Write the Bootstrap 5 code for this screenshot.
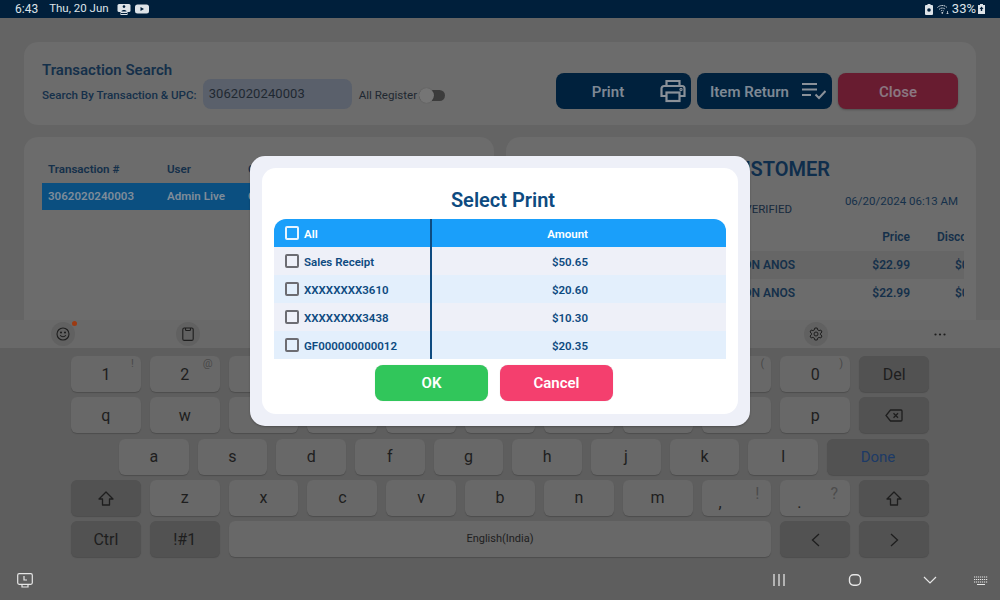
<!DOCTYPE html>
<html lang="en">
<head>
<meta charset="UTF-8">
<title>Transaction Search</title>
<link href="https://cdn.jsdelivr.net/npm/bootstrap@5.3.0/dist/css/bootstrap.min.css" rel="stylesheet">
<style>
  html, body { width: 1000px; height: 600px; overflow: hidden; }
  body { font-family: Roboto, "Liberation Sans", sans-serif; background: #646464; position: relative; }
  .status-bar { height: 18px; background: #001f3b; color: #dde3e8; font-size: 12px; padding: 0 15px; }
  .status-date { font-size: 11.5px; margin-left: 11px; margin-right: 8px; }
  .status-pct { font-size: 13px; margin: 0 2px 0 3px; }

  .main-area { height: 302px; padding: 24px 24px 0; overflow: hidden; background: #646464; }
  .panel { background: #6c6c6c; border-radius: 14px; }
  .search-panel { height: 83px; padding: 19px 18px 16px; margin-bottom: 12px; }
  .panel-title { font-size: 15px; line-height: 18px; font-weight: 600; color: #15304a; }
  .search-label { font-size: 11.6px; font-weight: 500; color: #15304a; margin-right: 6px; padding-top: 3px; }
  .search-input { width: 149px; height: 30px; background: #5a606b; border-radius: 8px; padding: 0 6px; font-size: 13px; letter-spacing: .1px; color: #1f2831; line-height: 30px; }
  .register-label { font-size: 11.6px; color: #1f2831; margin-left: 7px; padding-top: 3px; }
  .toggle-track { width: 26px; height: 11px; background: #3c3c3c; border-radius: 6px; position: relative; margin-left: 2px; margin-top: 2px; }
  .toggle-knob { position: absolute; left: 0; top: -2px; width: 15px; height: 15px; border-radius: 50%; background: #757575; box-shadow: 0 0 1px rgba(0,0,0,.3); }
  .act-group { gap: 6px; }
  .act-btn { height: 36px; border-radius: 8px; border: 0; padding: 2px 0 0; font-size: 15px; font-weight: 600; color: #7d8894; background: #00213d; }
  .act-btn:hover { color: #7d8894; background: #00213d; }
  .act-wide { width: 135px; }
  .act-close { width: 120px; background: #681c30; color: #8a7680; box-shadow: 0 1px 2px rgba(0,0,0,.25); }
  .act-close:hover { background: #681c30; color: #8a7680; }
  .print-icon { margin-right: 5px; margin-top: -2px; }
  .list-icon { margin-right: 6px; margin-top: -2px; }

  .lower-panel { width: 470px; height: 240px; overflow: hidden; }
  .tx-panel { padding: 24px 18px 0; }
  .tx-row { height: 27px; font-size: 11.6px; font-weight: 600; white-space: nowrap; overflow: hidden; padding-left: 6px; }
  .tx-head { height: 22px; color: #15304a; }
  .tx-sel { background: #0b4f80; color: #7f8c99; }
  .tx-c1 { width: 119px; }
  .tx-c2 { width: 81px; }

  .sale-panel { padding: 20px 12px 0 0; }
  .sale-title { font-size: 20px; line-height: 24px; font-weight: 600; color: #0f2e4c; text-align: right; padding-right: 134px; }
  .sale-meta { height: 46px; padding: 12px 6px 0 0; font-size: 11.5px; color: #15304a; }
  .sale-date { line-height: 16px; margin-left: auto; }
  .sale-verified { line-height: 16px; margin-top: 8px; width: 286px; flex-shrink: 0; text-align: right; color: #16293c; }
  .sale-row { height: 28px; font-size: 12px; font-weight: 600; color: #15304a; white-space: nowrap; overflow: hidden; }
  .sale-head { height: 24px; padding-top: 1px; }
  .sale-band { background: #666; }
  .sale-name { width: 289px; flex-shrink: 0; text-align: right; }
  .sale-price { width: 115px; flex-shrink: 0; text-align: right; }
  .sale-disc { padding-left: 27px; flex-shrink: 0; }
  .sale-amt { padding-left: 45px; flex-shrink: 0; }

  .kb-tools { height: 28px; background: #696969; display: grid; grid-template-columns: repeat(8, 125.6px); align-items: center; justify-items: center; }
  .tool-dot { width: 24px; height: 24px; border-radius: 50%; background: #616161; position: relative; }
  .tool-badge { position: absolute; top: -1px; right: -2px; width: 5px; height: 5px; border-radius: 50%; background: #9c3a12; }
  .tool-col-7 { grid-column: 7; }
  .tool-col-8 { grid-column: 8; margin-right: 4px; }
  .kb-body { height: 252px; background: #5e5e5e; padding: 8px 71px 0 71px; }
  .kb-row { display: grid; grid-template-columns: repeat(11, 1fr); gap: 9px; margin-bottom: 5.25px; }
  .kb-row-home { grid-template-columns: repeat(9, 1fr) 102px; padding-left: 48px; }
  .kb-key { height: 36px; background: #686868; border-radius: 6px; box-shadow: 0 1px 1px rgba(0,0,0,.18); font-size: 16px; color: #1e1e1e; position: relative; padding-top: 1px; }
  .kb-dark { background: #525252; }
  .kb-wide { grid-column: span 7; font-size: 11px; }
  .kb-hint { position: absolute; top: 1px; right: 7px; font-size: 11px; line-height: 14px; color: #484848; }
  .kb-hint-lg { top: 5px; right: 12px; font-size: 16px; line-height: 18px; color: #4c4c4c; }
  .kb-mark { position: absolute; bottom: 5px; left: 17px; font-size: 16px; line-height: 16px; }
  .kb-done { color: #1d3a66; font-size: 15px; }

  .nav-bar { position: absolute; left: 0; right: 0; bottom: 10px; height: 20px; padding: 0 12px 0 17px; }
  .nav-home { margin-left: 62px; }
  .nav-back { margin-left: 61px; }
  .nav-kbd { margin-left: 37px; }

  .sheet { position: absolute; left: 250px; top: 156px; width: 500px; height: 270px; background: #eef0f8; border-radius: 15px; padding: 12px; box-shadow: 0 1px 2px rgba(0,0,0,.25); }
  .sheet-inner { background: #fff; border-radius: 14px; height: 246px; padding: 0 12px; }
  .sheet-title { font-size: 20px; line-height: 24px; font-weight: 600; color: #0d4a80; text-align: center; padding: 20px 0 7px 6px; margin: 0; }
  .pick-table { height: 140px; overflow: hidden; }
  .pick-row { height: 28px; font-size: 11.5px; font-weight: 600; color: #0d4a80; }
  .pick-head { background: #1a9ffa; color: #fff; border-radius: 12px 12px 0 0; }
  .pick-odd { background: #eef0f8; }
  .pick-even { background: #e3effc; }
  .pick-name { width: 158px; height: 100%; padding-left: 11px; border-right: 2px solid #0d4a80; }
  .pick-text { padding-top: 3px; }
  .pick-amt { width: 156px; text-align: right; padding-top: 3px; }
  .pick-check.form-check-input { width: 14px; height: 14px; margin: 0 5px 0 0; background-color: transparent; border: 2px solid #6c6c72; border-radius: 2px; }
  .pick-head .pick-check.form-check-input { border-color: #e6f4ff; }
  .sheet-actions { margin-top: 6px; gap: 12px; padding-right: 12px; }
  .sheet-btn { width: 113px; height: 36px; border: 0; border-radius: 8px; padding: 1px 0 0; font-size: 15px; font-weight: 600; color: #fff; box-shadow: 0 0 1px rgba(0,0,0,.2); }
  .sheet-ok, .sheet-ok:hover { background: #31c65b; color: #fff; }
  .sheet-cancel, .sheet-cancel:hover { background: #f43f6e; color: #fff; }
</style>
</head>
<body>
  <div class="status-bar d-flex align-items-center">
    <span>6:43</span>
    <span class="status-date">Thu, 20 Jun</span>
    <svg width="14" height="12" viewBox="0 0 14 12" class="me-1"><rect x="0.5" y="1" width="13" height="8" rx="1.5" fill="#dde3e8"/><circle cx="7" cy="3.6" r="1.3" fill="#001f3b"/><path d="M4.5 8.5c0-2 5-2 5 0z" fill="#001f3b"/><rect x="4" y="9.5" width="6" height="2" fill="none" stroke="#dde3e8"/></svg>
    <svg width="14" height="10" viewBox="0 0 14 10"><rect width="14" height="9" y="0.5" rx="2.5" fill="#dde3e8"/><path d="M5.500 3v4l3.500-2z" fill="#001f3b"/></svg>
    <div class="ms-auto d-flex align-items-center">
      <svg width="8" height="11" viewBox="0 0 8 11" class="me-1"><path d="M2.500 0h3v1H7a1 1 0 0 1 1 1v8a1 1 0 0 1-1 1H1a1 1 0 0 1-1-1V2a1 1 0 0 1 1-1h1.500z" fill="#dde3e8"/><circle cx="4" cy="6" r="1.800" fill="#001f3b"/></svg>
      <svg width="12" height="11" viewBox="0 0 12 11"><g fill="none" stroke="#dde3e8" stroke-width="1" stroke-dasharray="1.500 .7"><path d="M0.500 3.500C3 .8 7.500 .8 10 3.500"/><path d="M2.200 5.300c1.700-1.700 4.400-1.700 6.100 0"/><path d="M3.900 7c.8-.8 2-.8 2.800 0"/></g><circle cx="5.300" cy="8.800" r=".9" fill="#dde3e8"/><path d="M10.500 7v3M9.500 9l1 1 1-1" stroke="#dde3e8" stroke-width=".7" fill="none"/></svg>
      <span class="status-pct">33%</span>
      <svg width="7" height="10" viewBox="0 0 7 10"><path d="M2 0h3v1h2v9H0V1h2z" fill="#dde3e8"/><path d="M3.500 2.500L1.500 5h1.300v2h1.400V5h1.300z" fill="#001f3b"/></svg>
    </div>
  </div>

  <div class="main-area">
    <div class="panel search-panel d-flex justify-content-between">
      <div>
        <div class="panel-title">Transaction Search</div>
        <div class="d-flex align-items-center">
          <span class="search-label">Search By Transaction &amp; UPC:</span>
          <div class="search-input">3062020240003</div>
          <span class="register-label">All Register</span>
          <div class="toggle-track"><div class="toggle-knob"></div></div>
        </div>
      </div>
      <div class="d-flex align-self-end act-group">
        <button class="btn act-btn act-wide d-flex align-items-center">
          <span class="flex-grow-1">Print</span>
          <svg class="print-icon" width="26" height="24" viewBox="0 0 26 24" fill="none" stroke="#8a9199" stroke-width="2.200"><path d="M6.500 7V2h13v5"/><path d="M6.500 17H1.500V9.500a2.500 2.500 0 0 1 2.500-2.500h18a2.500 2.500 0 0 1 2.500 2.500V17h-5"/><rect x="6.500" y="13.500" width="13" height="8.500"/><circle cx="21" cy="10.500" r=".6"/></svg>
        </button>
        <button class="btn act-btn act-wide d-flex align-items-center">
          <span class="flex-grow-1">Item Return</span>
          <svg class="list-icon" width="24" height="18" viewBox="0 0 24 18" fill="none" stroke="#8a9199" stroke-width="2"><path d="M0 2h15M0 7.500h15M0 13h9"/><path d="M13.500 12.500l3.500 3.500 6.500-7"/></svg>
        </button>
        <button class="btn act-btn act-close">Close</button>
      </div>
    </div>

    <div class="d-flex justify-content-between">
      <div class="panel lower-panel tx-panel">
        <div class="tx-row tx-head d-flex align-items-start">
          <div class="tx-c1">Transaction #</div><div class="tx-c2">User</div><div>C</div>
        </div>
        <div class="tx-row tx-sel d-flex align-items-center">
          <div class="tx-c1">3062020240003</div><div class="tx-c2">Admin Live</div><div>C</div>
        </div>
      </div>
      <div class="panel lower-panel sale-panel">
        <div class="sale-title">CUSTOMER</div>
        <div class="sale-meta d-flex">
          <div class="sale-verified">VERIFIED</div>
          <div class="sale-date">06/20/2024 06:13 AM</div>
        </div>
        <div class="sale-row sale-head d-flex align-items-start">
          <div class="sale-name"></div><div class="sale-price">Price</div><div class="sale-disc">Discount</div>
        </div>
        <div class="sale-row sale-band d-flex align-items-center">
          <div class="sale-name">ON ANOS</div><div class="sale-price">$22.99</div><div class="sale-amt">$0.00</div>
        </div>
        <div class="sale-row d-flex align-items-center">
          <div class="sale-name">ON ANOS</div><div class="sale-price">$22.99</div><div class="sale-amt">$0.00</div>
        </div>
      </div>
    </div>
  </div>

  <div class="kb-tools">
    <div class="tool-dot d-flex align-items-center justify-content-center">
      <svg width="14" height="14" viewBox="0 0 14 14" fill="none" stroke="#1e1e1e" stroke-width="1.100"><circle cx="7" cy="7" r="6"/><path d="M4.200 8.200c1.400 2 4.200 2 5.600 0"/><circle cx="5" cy="5.500" r=".5"/><circle cx="9" cy="5.500" r=".5"/></svg>
      <span class="tool-badge"></span>
    </div>
    <div class="tool-dot d-flex align-items-center justify-content-center">
      <svg width="12" height="14" viewBox="0 0 12 14" fill="none" stroke="#1e1e1e" stroke-width="1.100"><rect x="0.800" y="1" width="10.400" height="12.400" rx="1.500"/><path d="M3.500 1v1.500a1 1 0 0 0 1 1h3a1 1 0 0 0 1-1V1"/></svg>
    </div>
    <div class="tool-dot tool-col-7 d-flex align-items-center justify-content-center">
      <svg width="14" height="14" viewBox="0 0 14 14" fill="none" stroke="#1e1e1e" stroke-width="1"><path d="M5.800 1h2.400l.4 1.800 1.500.8 1.700-.6 1.200 2-1.400 1.200v1.600l1.400 1.200-1.200 2-1.700-.6-1.500.8-.4 1.800H5.800l-.4-1.800-1.500-.8-1.700.6-1.200-2 1.400-1.200V6.200L1 5l1.200-2 1.700.6 1.500-.8z"/><circle cx="7" cy="7" r="2"/></svg>
    </div>
    <svg class="tool-col-8" width="12" height="3" viewBox="0 0 12 3"><circle cx="1.500" cy="1.500" r="1.100" fill="#1e1e1e"/><circle cx="6" cy="1.500" r="1.100" fill="#1e1e1e"/><circle cx="10.500" cy="1.500" r="1.100" fill="#1e1e1e"/></svg>
  </div>

  <div class="kb-body">
    <div class="kb-row">
      <div class="kb-key d-flex align-items-center justify-content-center">1<span class="kb-hint">!</span></div>
      <div class="kb-key d-flex align-items-center justify-content-center">2<span class="kb-hint">@</span></div>
      <div class="kb-key"></div>
      <div class="kb-key"></div>
      <div class="kb-key"></div>
      <div class="kb-key"></div>
      <div class="kb-key"></div>
      <div class="kb-key"></div>
      <div class="kb-key"><span class="kb-hint">(</span></div>
      <div class="kb-key d-flex align-items-center justify-content-center">0<span class="kb-hint">)</span></div>
      <div class="kb-key kb-dark d-flex align-items-center justify-content-center">Del</div>
    </div>
    <div class="kb-row">
      <div class="kb-key d-flex align-items-center justify-content-center">q</div>
      <div class="kb-key d-flex align-items-center justify-content-center">w</div>
      <div class="kb-key"></div>
      <div class="kb-key"></div>
      <div class="kb-key"></div>
      <div class="kb-key"></div>
      <div class="kb-key"></div>
      <div class="kb-key"></div>
      <div class="kb-key"></div>
      <div class="kb-key d-flex align-items-center justify-content-center">p</div>
      <div class="kb-key kb-dark d-flex align-items-center justify-content-center">
        <svg width="18" height="13" viewBox="0 0 18 13" fill="none" stroke="#1e1e1e" stroke-width="1.300"><path d="M5.500 1H16a1 1 0 0 1 1 1v9a1 1 0 0 1-1 1H5.500L1 6.500z"/><path d="M8.500 4.300l4.500 4.400M13 4.300L8.500 8.700"/></svg>
      </div>
    </div>
    <div class="kb-row kb-row-home">
      <div class="kb-key d-flex align-items-center justify-content-center">a</div>
      <div class="kb-key d-flex align-items-center justify-content-center">s</div>
      <div class="kb-key d-flex align-items-center justify-content-center">d</div>
      <div class="kb-key d-flex align-items-center justify-content-center">f</div>
      <div class="kb-key d-flex align-items-center justify-content-center">g</div>
      <div class="kb-key d-flex align-items-center justify-content-center">h</div>
      <div class="kb-key d-flex align-items-center justify-content-center">j</div>
      <div class="kb-key d-flex align-items-center justify-content-center">k</div>
      <div class="kb-key d-flex align-items-center justify-content-center">l</div>
      <div class="kb-key kb-dark kb-done d-flex align-items-center justify-content-center">Done</div>
    </div>
    <div class="kb-row">
      <div class="kb-key kb-dark d-flex align-items-center justify-content-center">
        <svg width="16" height="15" viewBox="0 0 16 15" fill="none" stroke="#1e1e1e" stroke-width="1.300"><path d="M8 1l7 7h-3.500v6h-7V8H1z" stroke-linejoin="round"/></svg>
      </div>
      <div class="kb-key d-flex align-items-center justify-content-center">z</div>
      <div class="kb-key d-flex align-items-center justify-content-center">x</div>
      <div class="kb-key d-flex align-items-center justify-content-center">c</div>
      <div class="kb-key d-flex align-items-center justify-content-center">v</div>
      <div class="kb-key d-flex align-items-center justify-content-center">b</div>
      <div class="kb-key d-flex align-items-center justify-content-center">n</div>
      <div class="kb-key d-flex align-items-center justify-content-center">m</div>
      <div class="kb-key"><span class="kb-mark">,</span><span class="kb-hint kb-hint-lg">!</span></div>
      <div class="kb-key"><span class="kb-mark">.</span><span class="kb-hint kb-hint-lg">?</span></div>
      <div class="kb-key kb-dark d-flex align-items-center justify-content-center">
        <svg width="16" height="15" viewBox="0 0 16 15" fill="none" stroke="#1e1e1e" stroke-width="1.300"><path d="M8 1l7 7h-3.500v6h-7V8H1z" stroke-linejoin="round"/></svg>
      </div>
    </div>
    <div class="kb-row">
      <div class="kb-key kb-dark d-flex align-items-center justify-content-center">Ctrl</div>
      <div class="kb-key kb-dark d-flex align-items-center justify-content-center">!#1</div>
      <div class="kb-key kb-wide d-flex align-items-center justify-content-center">English(India)</div>
      <div class="kb-key kb-dark d-flex align-items-center justify-content-center">
        <svg width="9" height="14" viewBox="0 0 9 14" fill="none" stroke="#1e1e1e" stroke-width="1.300"><path d="M8 1L1.500 7 8 13"/></svg>
      </div>
      <div class="kb-key kb-dark d-flex align-items-center justify-content-center">
        <svg width="9" height="14" viewBox="0 0 9 14" fill="none" stroke="#1e1e1e" stroke-width="1.300"><path d="M1 1l6.500 6L1 13"/></svg>
      </div>
    </div>
  </div>

  <div class="nav-bar d-flex align-items-center">
    <svg width="16" height="15" viewBox="0 0 16 15" fill="none" stroke="#e6e6e6" stroke-width="1.200"><rect x="0.700" y="0.700" width="14.600" height="10.600" rx="1.500"/><path d="M7 3v4h3"/><path d="M5 11.500v2.500h6v-2.500"/></svg>
    <svg class="ms-auto" width="14" height="12" viewBox="0 0 14 12" stroke="#d8d8d8" stroke-width="1.400"><path d="M2 0v12M7 0v12M12 0v12"/></svg>
    <svg class="nav-home" width="14" height="12" viewBox="0 0 14 12" fill="none" stroke="#e6e6e6" stroke-width="1.400"><rect x="1.500" y="0.800" width="11" height="10.400" rx="4"/></svg>
    <svg class="nav-back" width="14" height="8" viewBox="0 0 14 8" fill="none" stroke="#e6e6e6" stroke-width="1.200"><path d="M1 1l6 6 6-6"/></svg>
    <svg class="nav-kbd" width="14" height="9" viewBox="0 0 14 9" fill="none" stroke="#e6e6e6"><path d="M0 1h14M0 3.500h14" stroke-dasharray="1.200 .8" stroke-width="1.200"/><path d="M0 6h14" stroke-dasharray="1.200 .8" stroke-width="1.200"/><path d="M3 8.500h8" stroke-width="1"/></svg>
  </div>

  <div class="sheet">
    <div class="sheet-inner">
      <h5 class="sheet-title">Select Print</h5>
      <div class="pick-table">
        <div class="pick-row pick-head d-flex align-items-center">
          <div class="pick-name d-flex align-items-center"><input class="form-check-input pick-check" type="checkbox"><span class="pick-text">All</span></div>
          <div class="pick-amt">Amount</div>
        </div>
        <div class="pick-row pick-odd d-flex align-items-center">
          <div class="pick-name d-flex align-items-center"><input class="form-check-input pick-check" type="checkbox"><span class="pick-text">Sales Receipt</span></div>
          <div class="pick-amt">$50.65</div>
        </div>
        <div class="pick-row pick-even d-flex align-items-center">
          <div class="pick-name d-flex align-items-center"><input class="form-check-input pick-check" type="checkbox"><span class="pick-text">XXXXXXXX3610</span></div>
          <div class="pick-amt">$20.60</div>
        </div>
        <div class="pick-row pick-odd d-flex align-items-center">
          <div class="pick-name d-flex align-items-center"><input class="form-check-input pick-check" type="checkbox"><span class="pick-text">XXXXXXXX3438</span></div>
          <div class="pick-amt">$10.30</div>
        </div>
        <div class="pick-row pick-even d-flex align-items-center">
          <div class="pick-name d-flex align-items-center"><input class="form-check-input pick-check" type="checkbox"><span class="pick-text">GF000000000012</span></div>
          <div class="pick-amt">$20.35</div>
        </div>
      </div>
      <div class="sheet-actions d-flex justify-content-center">
        <button class="btn sheet-btn sheet-ok">OK</button>
        <button class="btn sheet-btn sheet-cancel">Cancel</button>
      </div>
    </div>
  </div>

  <script src="https://cdn.jsdelivr.net/npm/bootstrap@5.3.0/dist/js/bootstrap.bundle.min.js"></script>
</body>
</html>
